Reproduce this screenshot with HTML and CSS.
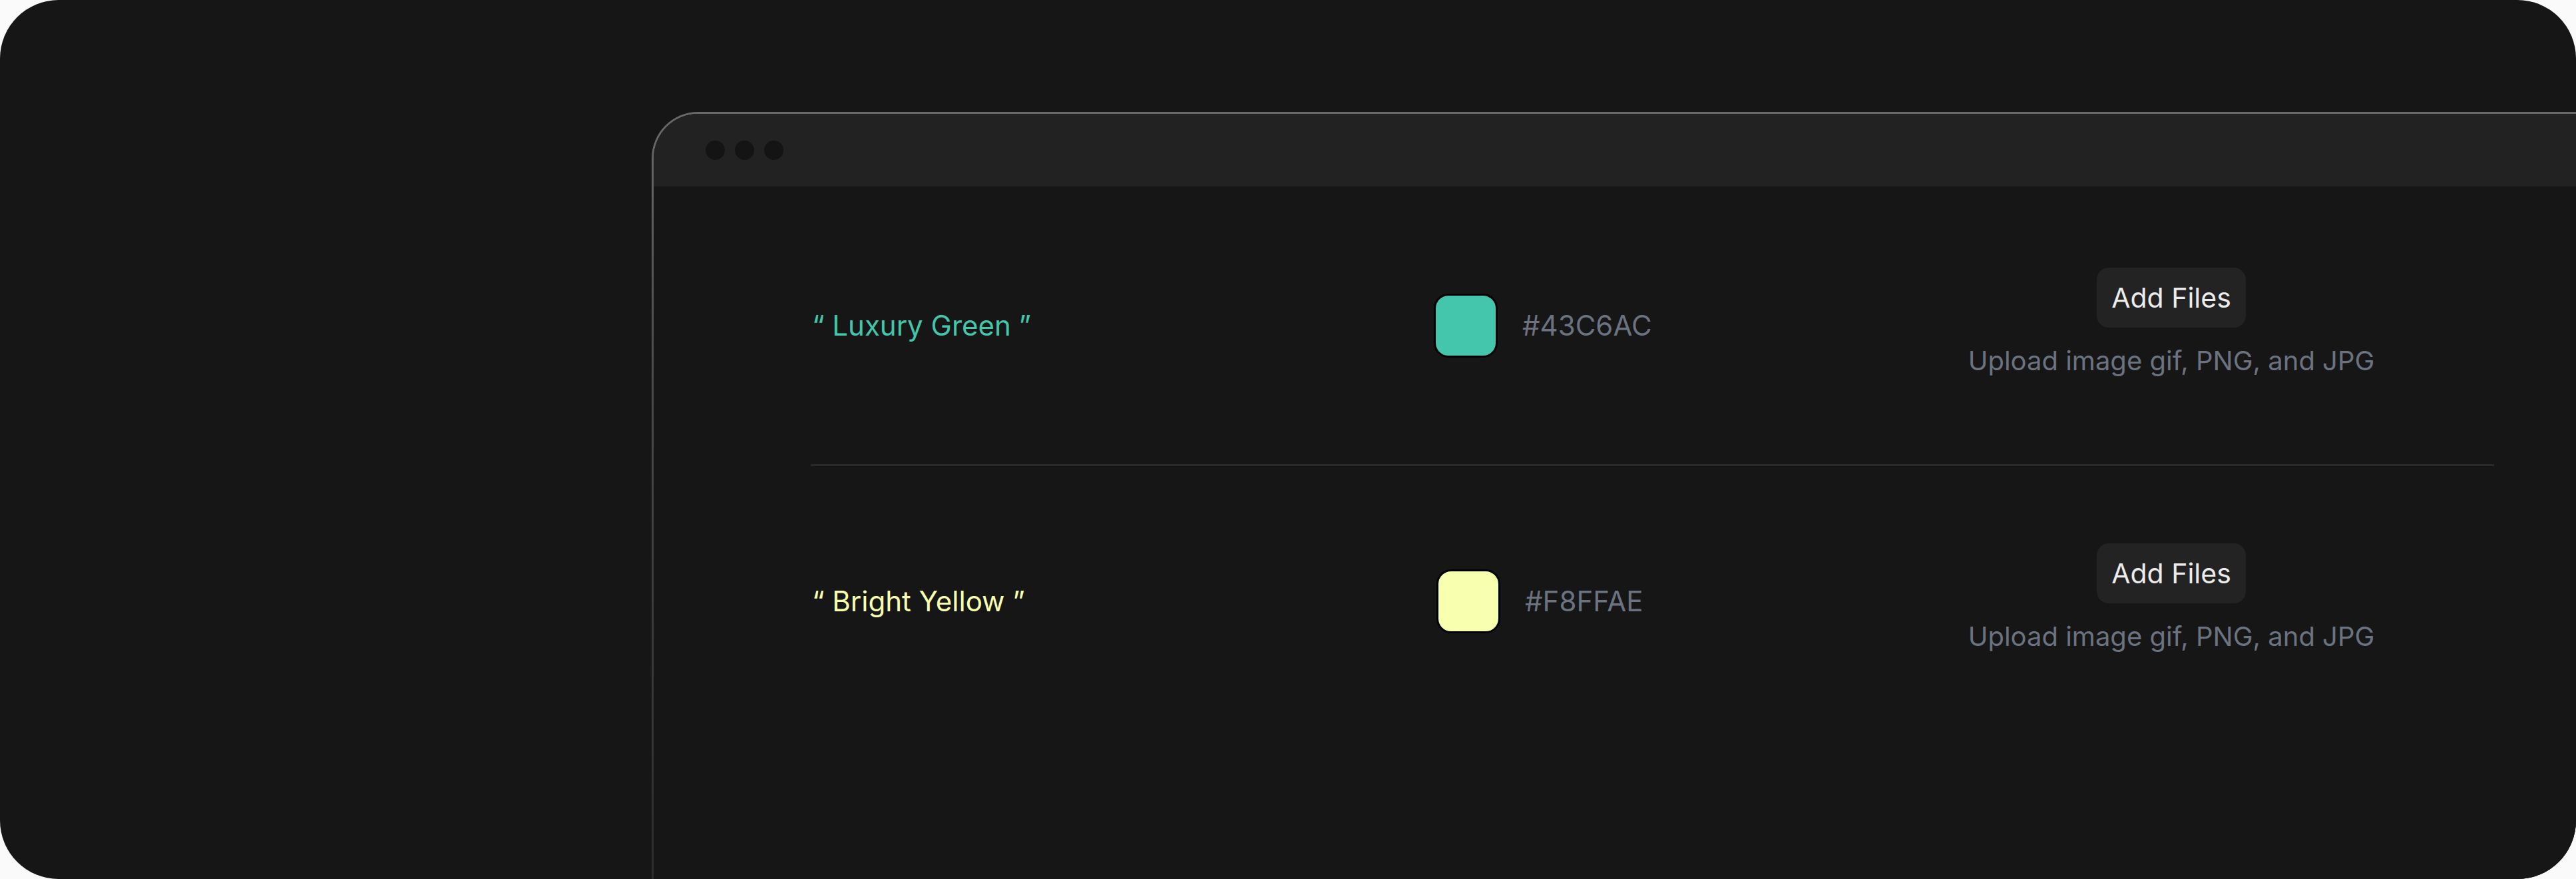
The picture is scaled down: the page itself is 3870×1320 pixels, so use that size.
FILE: index.html
```html
<!DOCTYPE html>
<html lang="en">
<head>
<meta charset="utf-8">
<title>Colors</title>
<link rel="stylesheet" href="styles.css">
</head>
<body>
<div class="frame">
  <div class="window">
    <div class="window-inner">
      <div class="titlebar">
        <span class="dot"></span><span class="dot"></span><span class="dot"></span>
      </div>
      <div class="content">
        <div class="row row-first">
          <div class="label label-green">“ Luxury Green ”</div>
          <div class="swatch-group">
            <span class="swatch swatch-green"></span>
            <span class="hex">#43C6AC</span>
          </div>
          <div class="action">
            <button class="add-btn" type="button">Add Files</button>
            <div class="hint">Upload image gif, PNG, and JPG</div>
          </div>
        </div>
        <div class="divider"></div>
        <div class="row row-second">
          <div class="label label-yellow">“ Bright Yellow ”</div>
          <div class="swatch-group swatch-group-alt">
            <span class="swatch swatch-yellow"></span>
            <span class="hex">#F8FFAE</span>
          </div>
          <div class="action">
            <button class="add-btn" type="button">Add Files</button>
            <div class="hint">Upload image gif, PNG, and JPG</div>
          </div>
        </div>
      </div>
    </div>
  </div>
</div>
</body>
</html>
```
FILE: styles.css
```css
html, body {
  margin: 0;
  padding: 0;
  background: #fafafa;
}

body {
  font-family: Inter, "Noto Sans", "Liberation Sans", sans-serif;
  width: 3870px;
  height: 1320px;
  overflow: hidden;
}

.frame {
  box-sizing: border-box;
  width: 3870px;
  height: 1320px;
  border-radius: 88px;
  background: #161616;
  overflow: hidden;
  padding: 168px 0 0 979px;
  display: flex;
}

.window {
  flex: none;
  box-sizing: border-box;
  width: 3000px;
  height: 1152px;
  padding: 3px 0 0 3px;
  border-top-left-radius: 70px;
  background: linear-gradient(180deg, #6a6a6a 0%, #4a4a4a 35%, #2c2c2c 100%);
}

.window-inner {
  height: 100%;
  background: #161616;
  border-top-left-radius: 67px;
  overflow: hidden;
}

.titlebar {
  height: 109px;
  background: #222222;
  display: flex;
  align-items: center;
  gap: 15px;
  padding-left: 78px;
}

.dot {
  width: 29px;
  height: 29px;
  border-radius: 50%;
  background: #141414;
}

.content {
  width: 2529px;
  padding-left: 236px;
}

.row {
  display: grid;
  grid-template-columns: 936px 623px 970px;
  align-items: center;
}

.row-first {
  padding: 122px 0 121px;
}

.row-second {
  padding-top: 116px;
}

.divider {
  height: 3px;
  background: #2a2a2e;
}

.label {
  font-size: 42px;
  line-height: 1.2;
  padding-left: 2px;
}

.label-green {
  color: #43c6ac;
}

.label-yellow {
  color: #f8ffae;
}

.swatch-group {
  display: flex;
  align-items: center;
  gap: 37px;
}

.swatch-group-alt {
  padding-left: 4px;
}

.swatch {
  box-sizing: border-box;
  width: 96px;
  height: 96px;
  border: 3px solid #000;
  border-radius: 22px;
}

.swatch-green {
  background: #43c6ac;
}

.swatch-yellow {
  background: #f8ffae;
}

.hex {
  font-size: 42px;
  line-height: 1.2;
  color: #6b7280;
}

.action {
  display: flex;
  flex-direction: column;
  align-items: center;
  gap: 25px;
  margin-bottom: 9px;
}

.add-btn {
  height: 90px;
  padding: 0 22px;
  border: 0;
  border-radius: 18px;
  background: #232323;
  color: #ececec;
  font-family: inherit;
  font-size: 41px;
  line-height: 1;
}

.hint {
  font-size: 40px;
  line-height: 1.25;
  color: #6b7280;
  white-space: nowrap;
}
```
